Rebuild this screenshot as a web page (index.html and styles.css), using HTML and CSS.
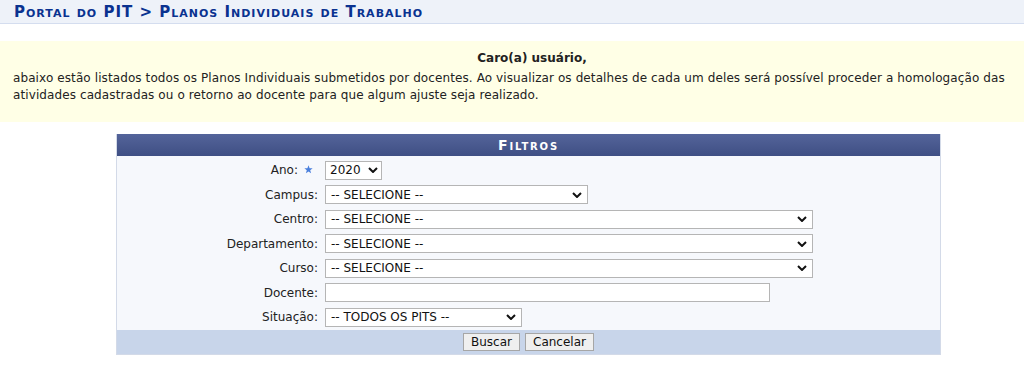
FILE: index.html
```html
<!DOCTYPE html>
<html lang="pt-BR">
<head>
    <meta charset="UTF-8">
    <title>Portal do PIT</title>
    <link rel="stylesheet" href="styles.css">
</head>
<body>
<div class="titulo">
    <h2>Portal do PIT &gt; Planos Individuais de Trabalho</h2>
</div>

<div class="descricao">
    <p class="saudacao">Caro(a) usuário,</p>
    <p>abaixo estão listados todos os Planos Individuais submetidos por docentes. Ao visualizar os detalhes de cada um deles será possível proceder a homologação das atividades cadastradas ou o retorno ao docente para que algum ajuste seja realizado.</p>
</div>

<form class="formulario">
    <div class="caption">Filtros</div>
    <div class="campos">
        <label class="rotulo">Ano:<svg class="obrigatorio" width="9" height="9" viewBox="0 0 10 10"><path d="M5 0.4 L6.2 3.6 L9.6 3.7 L6.9 5.8 L7.9 9.2 L5 7.2 L2.1 9.2 L3.1 5.8 L0.4 3.7 L3.8 3.6 Z" fill="#4a7fdc"/></svg></label>
        <div><select class="sel-ano"><option>2020</option></select></div>

        <label class="rotulo">Campus:</label>
        <div><select class="sel-campus"><option>-- SELECIONE --</option></select></div>

        <label class="rotulo">Centro:</label>
        <div><select class="sel-largo"><option>-- SELECIONE --</option></select></div>

        <label class="rotulo">Departamento:</label>
        <div><select class="sel-largo"><option>-- SELECIONE --</option></select></div>

        <label class="rotulo">Curso:</label>
        <div><select class="sel-largo"><option>-- SELECIONE --</option></select></div>

        <label class="rotulo">Docente:</label>
        <div><input type="text" class="txt-docente"></div>

        <label class="rotulo">Situação:</label>
        <div><select class="sel-situacao"><option>-- TODOS OS PITS --</option></select></div>
    </div>
    <div class="rodape">
        <button type="button">Buscar</button>
        <button type="button">Cancelar</button>
    </div>
</form>
</body>
</html>
```

FILE: styles.css
```css
body{
    margin: 0;
    font-family: "DejaVu Sans", Verdana, sans-serif;
    font-size: 12px;
    color: #222;
    background: #fff;
}

/* barra do titulo */
.titulo{
    height: 23px;
    background: #eef2f9;
    border-bottom: 1px solid #d4ddef;
    padding-left: 14px;
    display: flex;
    align-items: center;
}
.titulo h2{
    margin: 0;
    font-size: 15px;
    font-weight: bold;
    font-variant: small-caps;
    color: #0a3290;
    letter-spacing: 1px;
}

/* caixa amarela */
.descricao{
    margin-top: 17px;
    background: #ffffe6;
    padding: 9px 8px 18px 13px;
}
.descricao p{
    margin: 0;
    line-height: 17px;
    letter-spacing: 0.1px;
}
.descricao .saudacao{
    font-weight: bold;
    text-align: center;
    padding-left: 35px;
    margin-bottom: 3px;
    letter-spacing: 0;
}

/* formulario de filtros */
.formulario{
    margin: 12px 83px 0 116px;
    width: 825px;
    box-sizing: border-box;
    border: 1px solid #d3dae8;
    border-top: none;
}
.caption{
    height: 22px;
    line-height: 22px;
    background: linear-gradient(#54649a, #3f4f84);
    color: #fff;
    text-align: center;
    font-weight: bold;
    font-variant: small-caps;
    font-size: 14px;
    letter-spacing: 1.8px;
}
.campos{
    background: #f6f8fc;
    padding-top: 2px;
    display: grid;
    grid-template-columns: 201px 1fr;
    grid-auto-rows: 24.5px;
    column-gap: 7px;
    align-items: center;
}
.rotulo{
    text-align: right;
    color: #222;
    display: flex;
    justify-content: flex-end;
    align-items: center;
}
.obrigatorio{
    margin: 0 5px 1px 6px;
}
.campos div{
    display: flex;
    align-items: center;
}

select,
.txt-docente{
    font-family: "DejaVu Sans", Verdana, sans-serif;
    font-size: 12px;
    color: #111;
    height: 19px;
    box-sizing: border-box;
    border: 1px solid #b5b5b5;
    background-color: #fff;
    border-radius: 0;
    margin: 0;
}
select{
    -webkit-appearance: none;
    appearance: none;
    padding: 0 22px 0 5px;
    background-image: url("data:image/svg+xml;utf8,<svg xmlns='http://www.w3.org/2000/svg' width='10' height='6' viewBox='0 0 10 6'><path d='M1 1 L5 5 L9 1' fill='none' stroke='%23111' stroke-width='2'/></svg>");
    background-repeat: no-repeat;
    background-position: right 5px center;
}
.sel-ano{
    width: 57px;
    padding: 0 14px 0 4px;
    background-position: right 3px center;
}
.sel-campus{ width: 263px; }
.sel-largo{ width: 488px; }
.sel-situacao{ width: 197px; }
.txt-docente{
    width: 445px;
    padding: 0 4px;
}

.rodape{
    height: 24px;
    background: #c8d5ea;
    display: flex;
    justify-content: center;
    align-items: center;
    gap: 5px;
}
.rodape button{
    font-family: "DejaVu Sans", Verdana, sans-serif;
    font-size: 12px;
    color: #111;
    height: 18px;
    padding: 0 7px;
    background: #efefef;
    border: 1px solid #a6a6a6;
    border-radius: 0;
}
```
